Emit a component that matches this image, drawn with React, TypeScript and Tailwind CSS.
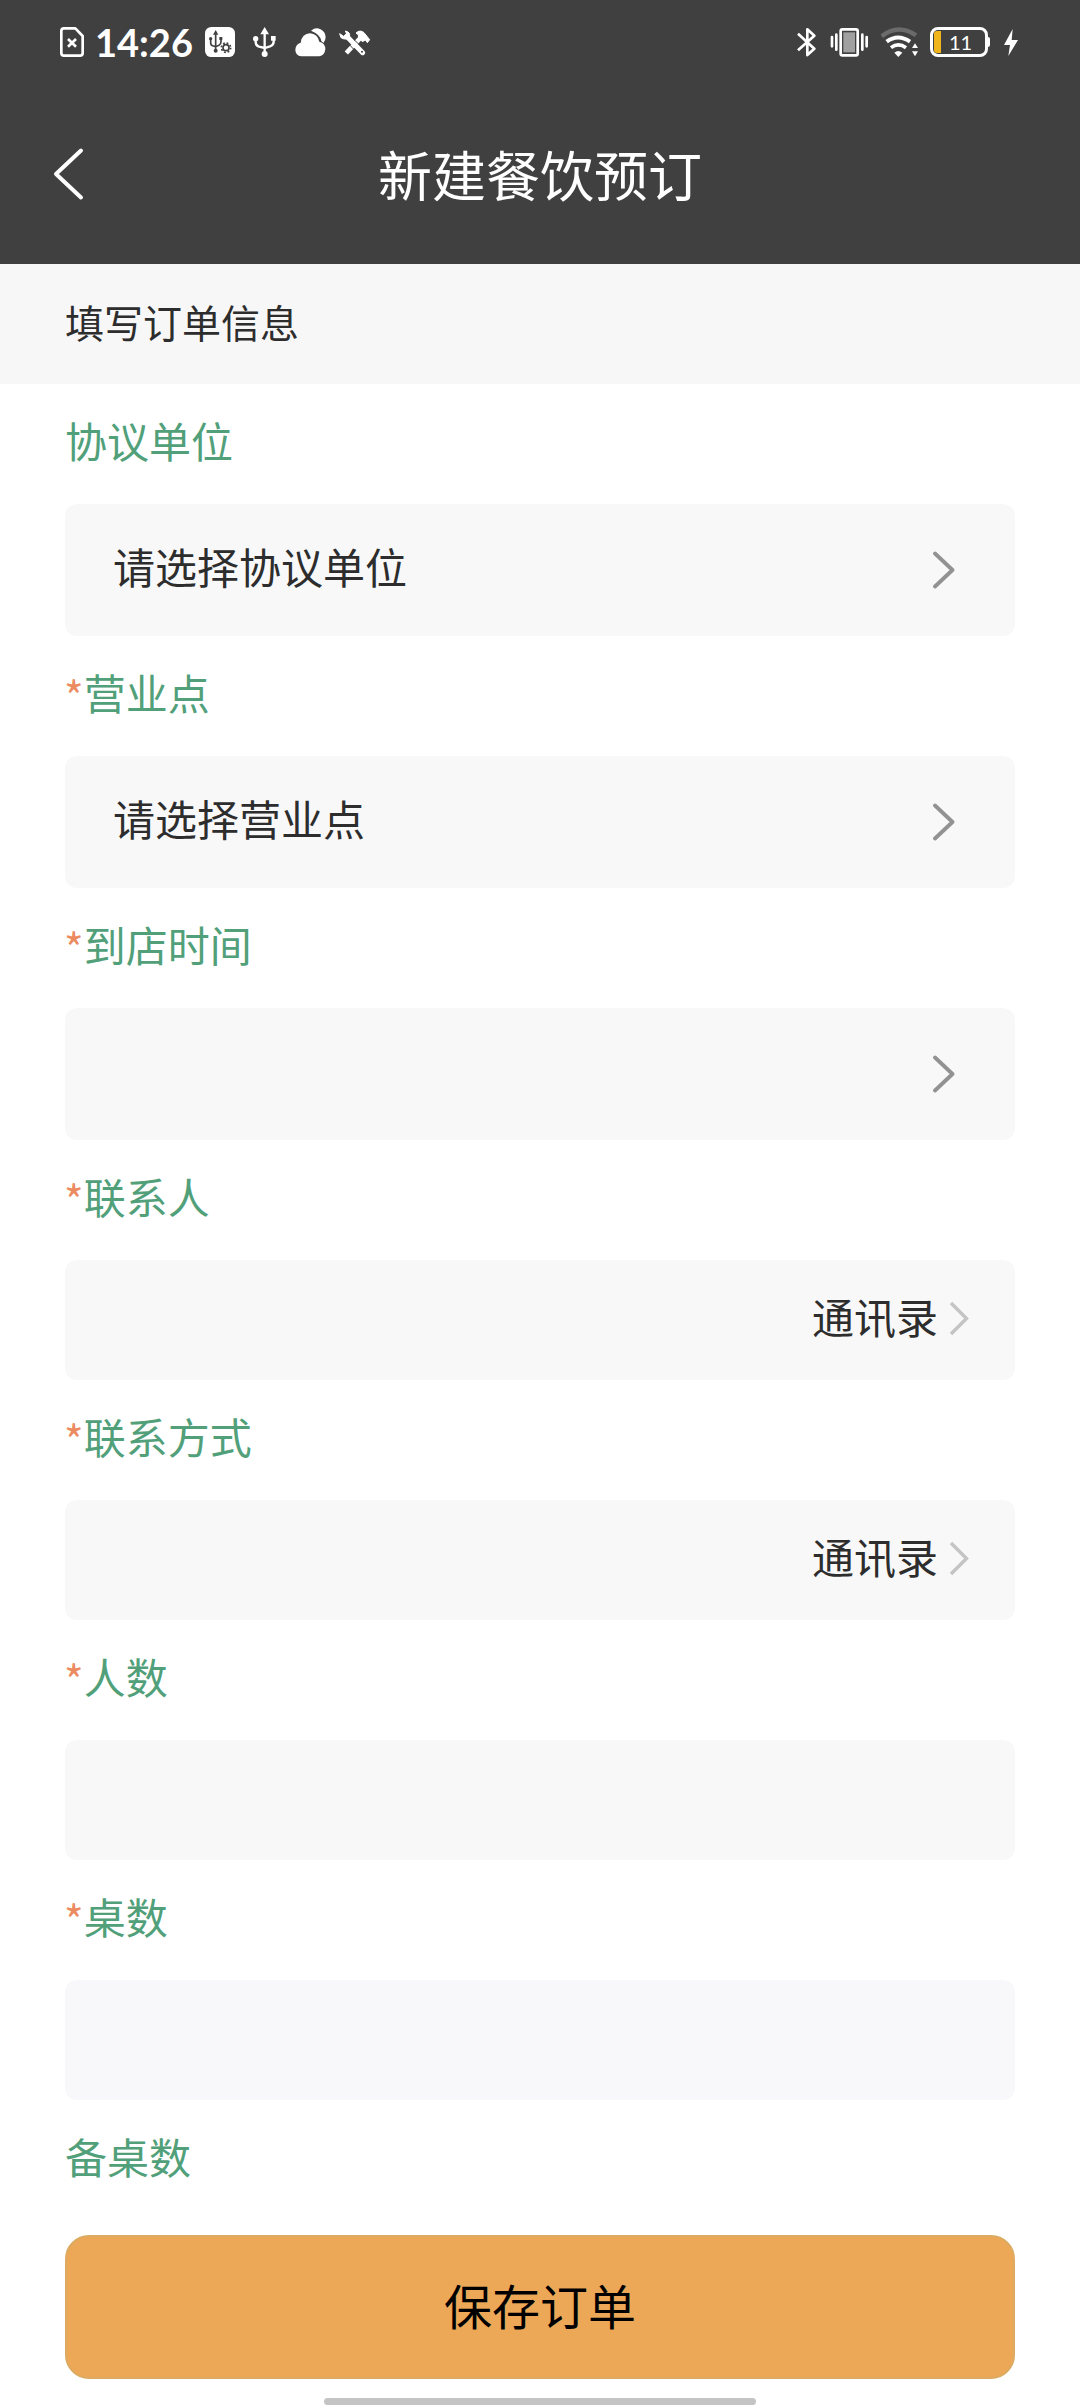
import { ReactNode } from 'react';

type Field = {
  label: string;
  required?: boolean;
  kind: 'select' | 'contact' | 'input';
  text?: string;
  bg?: string;
};

const fields: Field[] = [
  { label: '协议单位', kind: 'select', text: '请选择协议单位' },
  { label: '营业点', required: true, kind: 'select', text: '请选择营业点' },
  { label: '到店时间', required: true, kind: 'select' },
  { label: '联系人', required: true, kind: 'contact', text: '通讯录', bg: 'bg-[#f9f8f8]' },
  { label: '联系方式', required: true, kind: 'contact', text: '通讯录' },
  { label: '人数', required: true, kind: 'input' },
  { label: '桌数', required: true, kind: 'input', bg: 'bg-[#f8f8fa]' },
];

function Label({ required, children }: { required?: boolean; children: ReactNode }) {
  return (
    <div className="flex h-[120px] items-center pb-2 text-[42px] leading-none text-[#51a07a]">
      {required && <span className="-ml-px pt-1.5 text-[#ec8a60]">*</span>}
      <span>{children}</span>
    </div>
  );
}

function StatusBar() {
  return (
    <div className="flex h-[84px] items-center pl-[60px] pr-[62px]">
      {/* no sim */}
      <svg className="h-[30px] w-6" viewBox="60 50 72 90" fill="none" stroke="#fff">
        <path d="M70 54H106L128 77V128Q128 136 120 136H72Q64 136 64 128V62Q64 54 72 54Z" strokeWidth="8" strokeLinejoin="round" />
        <path d="M84 86L108 109M108 86L84 109" strokeWidth="8" />
      </svg>
      <span className="ml-[11px] w-[110px] whitespace-nowrap font-['Lato',sans-serif] text-[38px] font-bold leading-none">14:26</span>
      {/* usb settings */}
      <svg className="h-[30px] w-[30px]" viewBox="495 50 90 90">
        <rect x="495" y="50" width="90" height="90" rx="19" fill="#fff" />
        <g fill="none" stroke="#404040" strokeWidth="5">
          <path d="M527 68V120M512 85V97Q512 105 520 107L527 109L537 105Q543 102 543 94V86" />
          <circle cx="558" cy="112" r="9" />
          <circle cx="558" cy="112" r="14" strokeWidth="5" strokeDasharray="5.5 5.5" />
        </g>
        <path d="M527 59L535 73H519Z" fill="#404040" />
        <circle cx="512" cy="85" r="5" fill="#404040" />
        <rect x="538" y="80" width="9" height="9" fill="#404040" />
        <circle cx="527" cy="121" r="6" fill="#404040" />
      </svg>
      {/* usb */}
      <svg className="ml-[18px] h-[30px] w-[23px]" viewBox="640 50 69 90">
        <path d="M675 66V132M648 86V95Q648 106 658 109L675 113L691 108Q702 104 702 94V84" fill="none" stroke="#fff" strokeWidth="7" />
        <path d="M675 50L688 72H662Z" fill="#fff" />
        <circle cx="648" cy="85" r="8" fill="#fff" />
        <rect x="694" y="77" width="14" height="14" fill="#fff" />
        <circle cx="675" cy="131" r="9" fill="#fff" />
      </svg>
      {/* weather */}
      <svg className="ml-[19px] h-[30px] w-[31px]" viewBox="764 50 93 90" fill="#fff">
        <path d="M783 138Q765 136 765 118Q766 102 781 97Q785 70 809 69Q831 70 837 94Q855 98 855 117Q853 136 837 138Z" />
        <path d="M812 61Q822 53 832 54Q851 58 855 75Q858 89 849 98L843 92Q841 73 812 61Z" />
      </svg>
      {/* developer tools */}
      <svg className="ml-[13px] h-[30px] w-8" viewBox="897 50 96 90" fill="none" stroke="#fff">
        <path d="M920 78L968 127" strokeWidth="15" strokeLinecap="round" />
        <path d="M919 128L961 83" strokeWidth="14" />
        <path d="M916 62Q933 65 928 81Q918 91 903 82L899 70L911 78L920 71Z" fill="#fff" strokeWidth="3" />
        <path d="M948 68Q960 57 972 67L989 88L982 97L976 89L967 94L956 81Q958 73 948 68Z" fill="#fff" strokeWidth="3" />
        <path d="M928 103L946 122M942 88L956 101" stroke="#404040" strokeWidth="3" />
        <circle cx="966" cy="124" r="3" fill="#404040" stroke="none" />
      </svg>

      {/* bluetooth */}
      <svg className="ml-auto h-[30px] w-[19px]" viewBox="49 50 57 90" fill="none" stroke="#fff" strokeWidth="8">
        <path d="M52 70L101 115L80 134V57L101 76L52 120" strokeLinejoin="round" />
      </svg>
      {/* vibrate */}
      <svg className="ml-[14px] h-[30px] w-[39px]" viewBox="149 50 117 90" fill="none" stroke="#fff">
        <rect x="181" y="57" width="51" height="78" rx="5" strokeWidth="8" />
        <rect x="189" y="66" width="35" height="60" fill="#a0a0a0" stroke="none" />
        <path d="M155 80V108M168 73V118M246 73V118M259 80V108" strokeWidth="8" strokeLinecap="round" />
      </svg>
      {/* wifi */}
      <svg className="ml-[12px] h-[30px] w-[37px]" viewBox="302 50 111 90" fill="none">
        <path d="M304 78Q353 38 407 75" stroke="#6b6b6b" strokeWidth="13" />
        <path d="M319 94Q353 69 389 94" stroke="#fff" strokeWidth="12" />
        <path d="M332 112Q354 95 377 112" stroke="#fff" strokeWidth="11" />
        <path d="M342 127Q354 117 366 127L354 140Z" fill="#fff" />
        <path d="M404 99L413 113H395ZM404 138L413 123H395Z" fill="#fff" />
      </svg>
      {/* battery */}
      <div className="ml-[12px] flex items-center">
        <div className="flex h-[30px] w-[58px] items-center rounded-[8px] border-[3px] border-white p-px">
          <div className="h-full w-[7px] rounded-l-[3px] bg-[#f1b51c]"></div>
          <span className="flex-1 pr-1 text-center font-['Lato',sans-serif] text-[20px] leading-none">11</span>
        </div>
        <div className="h-[10px] w-[2px] rounded-r bg-white"></div>
      </div>
      {/* charging */}
      <svg className="ml-[14px] h-[30px] w-[14px]" viewBox="672 50 42 90">
        <path d="M698 56L672 104H690L685 137L714 89H695Z" fill="#fff" />
      </svg>
    </div>
  );
}

function FieldBox({ field }: { field: Field }) {
  const bg = field.bg ?? 'bg-[#f8f8f8]';

  if (field.kind === 'select') {
    return (
      <div className={`flex h-[132px] items-center justify-between rounded-xl pl-12 pr-[60px] ${bg}`}>
        <span className="pb-2 text-[42px] leading-none text-[#2d2d2d]">{field.text}</span>
        <svg className="h-10 w-[22px]" viewBox="0 0 22 40" fill="none" stroke="#929292" strokeWidth="3.8" strokeLinecap="round" strokeLinejoin="round">
          <path d="M2 3.5L19.5 20L2 36.5" />
        </svg>
      </div>
    );
  }

  return (
    <div className={`flex h-[120px] items-center justify-end rounded-xl pr-[46px] ${bg}`}>
      {field.kind === 'contact' && (
        <>
          <span className="pb-2 text-[42px] leading-none text-[#2d2d2d]">{field.text}</span>
          <svg className="mb-1 ml-[11px] h-9 w-5" viewBox="0 0 20 36" fill="none" stroke="#c4c4c4" strokeWidth="3.4">
            <path d="M2 3L17.5 18.5L2 34" />
          </svg>
        </>
      )}
    </div>
  );
}

export default function App() {
  return (
    <div className="flex h-[2408px] w-[1080px] flex-col overflow-hidden bg-white font-['Noto_Sans_CJK_SC',sans-serif]">
      <header className="h-[264px] shrink-0 bg-[#404040] text-white">
        <StatusBar />
        <div className="flex h-[180px] items-center justify-between px-[52px]">
          <svg className="h-[54px] w-8" viewBox="0 0 32 54" fill="none" stroke="#fff" strokeWidth="4" strokeLinecap="round" strokeLinejoin="round">
            <path d="M29 3.5L4 27L29 50.5" />
          </svg>
          <h1 className="text-[54px] leading-none">新建餐饮预订</h1>
          <div className="w-8"></div>
        </div>
      </header>

      <div className="flex h-[120px] shrink-0 items-center bg-[#f7f7f7] px-[65px] pb-1.5 text-[39px] leading-none text-[#2d2d2d]">
        填写订单信息
      </div>

      <main className="h-[1851px] shrink-0 px-[65px]">
        {fields.map((field) => (
          <div key={field.label}>
            <Label required={field.required}>{field.label}</Label>
            <FieldBox field={field} />
          </div>
        ))}
        <Label>备桌数</Label>
      </main>

      <footer className="flex flex-col items-center px-[65px]">
        <button className="h-36 w-full rounded-3xl border-2 border-[#dcaa61] bg-[#eca857] pb-1.5 text-[48px] leading-none text-black">保存订单</button>
        <div className="mt-[19px] h-[7px] w-[432px] rounded-full bg-[#c4c4c4]"></div>
      </footer>
    </div>
  );
}
